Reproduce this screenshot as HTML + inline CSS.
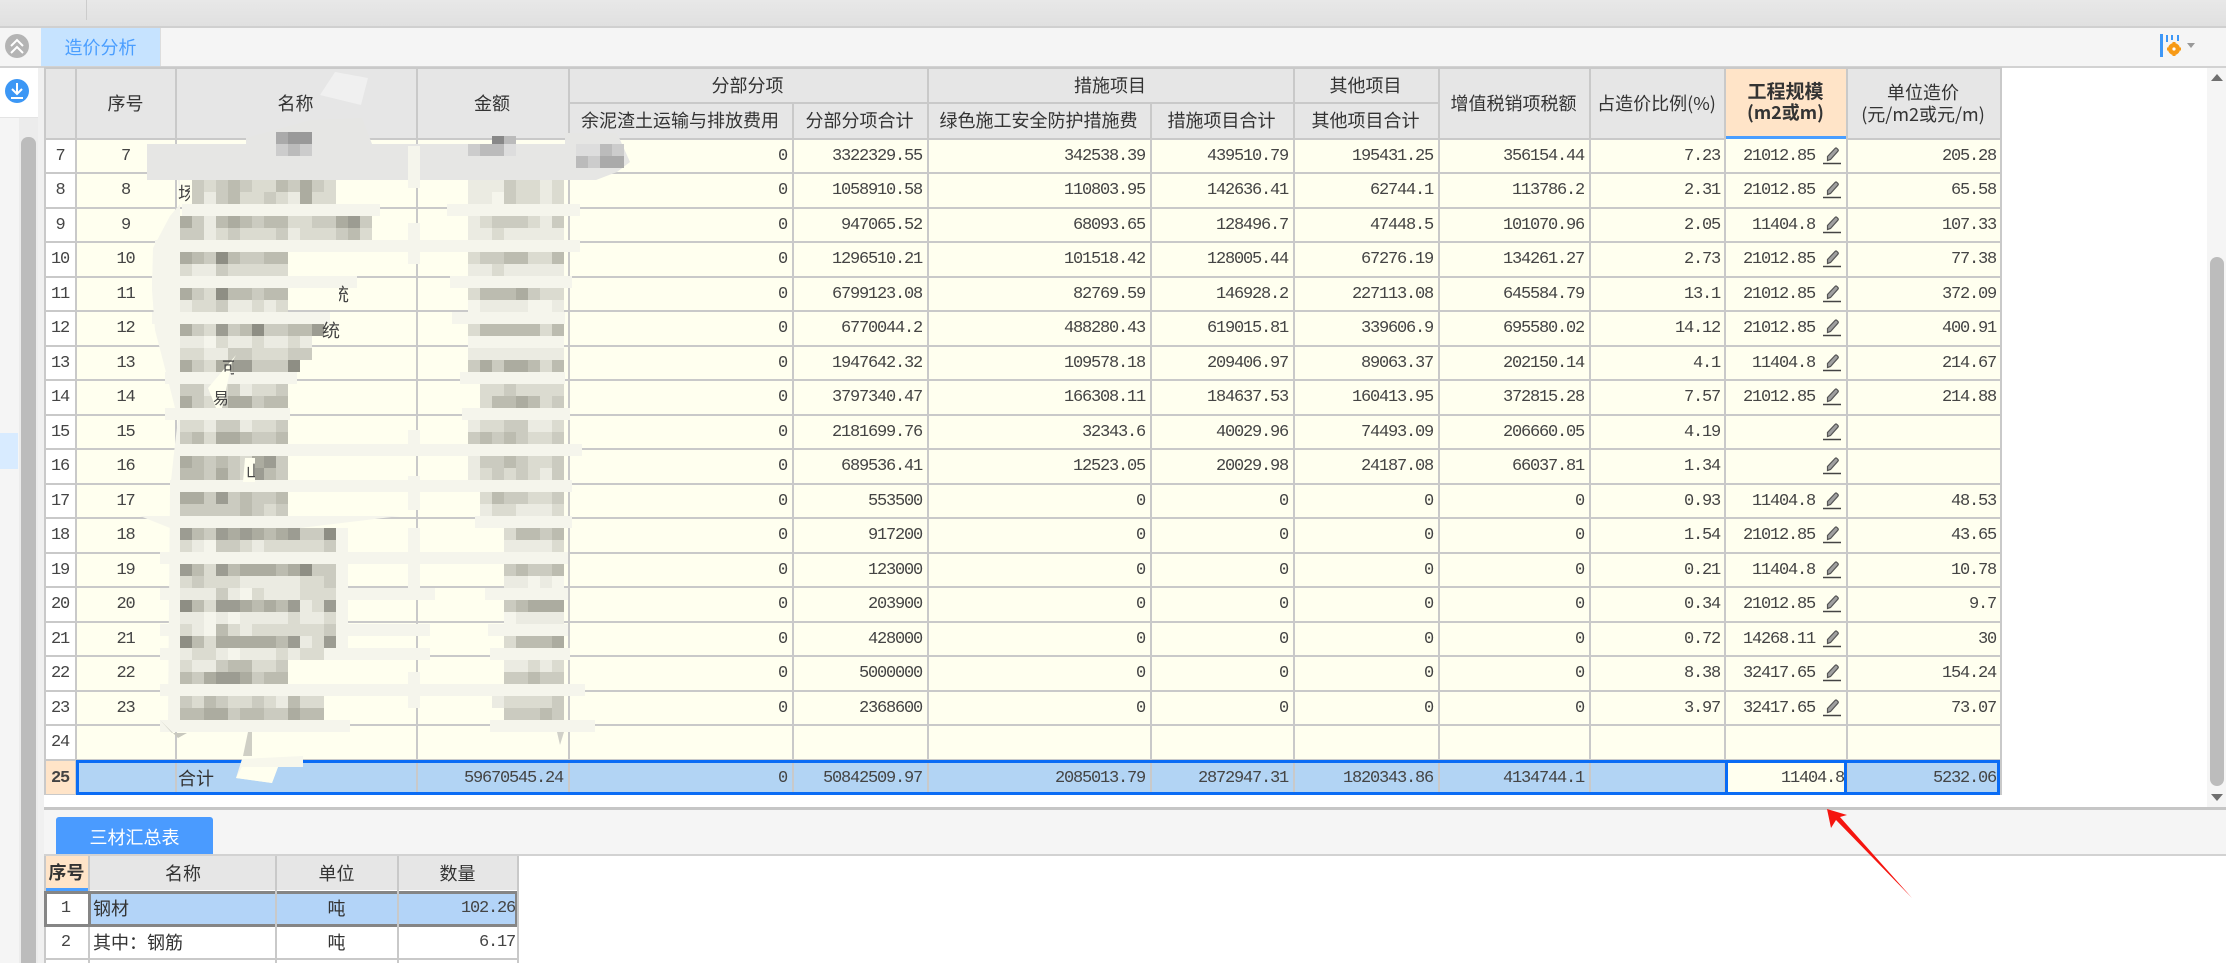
<!DOCTYPE html>
<html><head><meta charset="utf-8"><style>
html,body{margin:0;padding:0;width:2226px;height:963px;overflow:hidden;background:#fff}
body{position:relative;font:18px/20px "WenQuanYi Zen Hei","Noto Sans CJK SC",sans-serif;color:#333}
.x{position:absolute}
.h{position:absolute;text-align:center;white-space:nowrap;line-height:20px}
.v{position:absolute;width:2px;background:#c9c9c9}
.l{position:absolute;height:2px;background:#c9c9c9}
.r{position:absolute;left:0;width:2000px;height:34px;font:17px/35px "Liberation Mono",monospace;letter-spacing:-1.2px;color:#444}
.r i{position:absolute;font-style:normal;text-align:right;white-space:nowrap;top:0}
.r i:nth-child(1){left:44px;width:32px;text-align:center}
.r i:nth-child(2){left:76px;width:99px;text-align:center}
.r i:nth-child(3){left:175px;width:241px}
.r i:nth-child(4){left:416px;width:147px}
.r i:nth-child(5){left:568px;width:219px}
.r i:nth-child(6){left:792px;width:130px}
.r i:nth-child(7){left:927px;width:218px}
.r i:nth-child(8){left:1150px;width:138px}
.r i:nth-child(9){left:1293px;width:140px}
.r i:nth-child(10){left:1438px;width:146px}
.r i:nth-child(11){left:1589px;width:131px}
.r i:nth-child(12){left:1725px;width:90px}
.r i:nth-child(13){left:1846px;width:150px}
.r svg{position:absolute;left:1822px;top:7px;width:20px;height:20px}
.m{position:absolute;display:flex;height:12px}
.m i{display:block;width:12px;height:12px;flex:none}
.a{background:#acaca0}.b{background:#bcbcb0}.c{background:#cbcbc0}.d{background:#dbdbd0}.e{background:#ebebe2}.f{background:#f5f5ec}.k{background:#8e8e84}.n{background:#9c9c92}
.g1{background:#aaa}.g2{background:#999}.g3{background:#ccc}.g4{background:#bbb}.g5{background:#ddd}.g6{background:#888}
</style></head><body>

<!-- top bar -->
<div class="x" style="left:0;top:0;width:2226px;height:27px;background:linear-gradient(#e8e8e8,#e0e0e0)"></div>
<div class="x" style="left:86px;top:0;width:1px;height:20px;background:#ccc"></div>
<div class="x" style="left:0;top:26px;width:2226px;height:2px;background:#d0d0d0"></div>
<!-- tab bar -->
<div class="x" style="left:0;top:28px;width:2226px;height:38px;background:#f5f5f5"></div>
<div class="x" style="left:41px;top:28px;width:119px;height:38px;background:#c6e3ff;color:#4a9eff;text-align:center;line-height:38px">造价分析</div>
<div class="x" style="left:160px;top:28px;width:1px;height:38px;background:#ddd"></div>
<div class="x" style="left:0;top:66px;width:2226px;height:2px;background:#d2d2d2"></div>
<!-- left panel -->
<div class="x" style="left:0;top:68px;width:44px;height:895px;background:#f5f5f5"></div>
<div class="x" style="left:0;top:68px;width:40px;height:49px;background:#fff"></div>
<div class="x" style="left:0;top:117px;width:40px;height:1px;background:#e4e4e4"></div>
<div class="x" style="left:19px;top:118px;width:19px;height:845px;background:#ececec"></div>
<div class="x" style="left:21px;top:137px;width:15px;height:840px;border-radius:7px;background:#bcbcbc"></div>
<div class="x" style="left:0;top:433px;width:18px;height:36px;background:#d8ebff"></div>
<div class="x" style="left:38px;top:68px;width:6px;height:895px;background:#f0f0f0"></div>
<svg class="x" style="left:0;top:30px" width="40" height="90" viewBox="0 30 40 90">
<circle cx="17" cy="46" r="12" fill="#b4b4b4"/>
<path d="M11 46l6-6 6 6M11 53l6-6 6 6" fill="none" stroke="#fff" stroke-width="2"/>
<circle cx="17" cy="91" r="12" fill="#3c97f5"/>
<path d="M17 83v11M12 89l5 5 5-5M11 98h12" fill="none" stroke="#fff" stroke-width="2"/>
<path d="M22 129l6-7 6 7z" fill="#6f6f6f"/>
</svg>
<!-- top right icon -->
<svg class="x" style="left:2155px;top:30px" width="45" height="30" viewBox="2155 30 45 30">
<path d="M2160 34h3v23h-3zM2166 35h2v7h-2zM2171 35h2v5h-2zM2177 35h2v6h-2z" fill="#3d97f7"/>
<path d="M2172.500 42h3v3h-3zM2172.500 53h3v3h-3zM2167 47.500h3v3h-3zM2178 47.500h3v3h-3z" fill="#f79a16"/>
<circle cx="2174" cy="49" r="6" fill="#f79a16"/>
<circle cx="2174" cy="49" r="1.600" fill="#fff"/>
<path d="M2187 43h8l-4 5z" fill="#999"/>
</svg>
<!-- right scroll -->
<div class="x" style="left:2207px;top:68px;width:19px;height:739px;background:#f5f5f5"></div>
<div class="x" style="left:2210px;top:257px;width:14px;height:529px;border-radius:7px;background:#bcbcbc"></div>
<svg class="x" style="left:2207px;top:70px" width="19" height="735" viewBox="2207 70 19 735">
<path d="M2211 81l6-7 6 7z" fill="#6f6f6f"/><path d="M2211 794h12l-6 7z" fill="#6f6f6f"/>
</svg>

<!-- table backgrounds -->
<div class="x" style="left:44px;top:68px;width:1956px;height:71px;background:#e6e6e6"></div>
<div class="x" style="left:1725px;top:68px;width:121px;height:68px;background:#ffe4c8"></div>
<div class="x" style="left:1724px;top:136px;width:123px;height:3px;background:#4a9eff"></div>
<div class="x" style="left:44px;top:139px;width:32px;height:621px;background:#fff"></div>
<div class="x" style="left:76px;top:139px;width:1924px;height:621px;background:#ffffef"></div>
<div class="x" style="left:44px;top:760px;width:32px;height:35px;background:#ffe4c8"></div>
<div class="x" style="left:76px;top:760px;width:1924px;height:35px;background:#b2d4f4"></div>

<!-- horizontal lines -->
<div class="l" style="left:44px;top:67px;width:1957px"></div>
<div class="l" style="left:568px;top:102px;width:870px"></div>
<div class="l" style="left:44px;top:138px;width:1680px"></div>
<div class="l" style="left:1847px;top:138px;width:154px"></div>
<div class="l" style="left:44px;top:172px;width:1957px"></div>
<div class="l" style="left:44px;top:207px;width:1957px"></div>
<div class="l" style="left:44px;top:241px;width:1957px"></div>
<div class="l" style="left:44px;top:276px;width:1957px"></div>
<div class="l" style="left:44px;top:310px;width:1957px"></div>
<div class="l" style="left:44px;top:345px;width:1957px"></div>
<div class="l" style="left:44px;top:379px;width:1957px"></div>
<div class="l" style="left:44px;top:414px;width:1957px"></div>
<div class="l" style="left:44px;top:448px;width:1957px"></div>
<div class="l" style="left:44px;top:483px;width:1957px"></div>
<div class="l" style="left:44px;top:517px;width:1957px"></div>
<div class="l" style="left:44px;top:552px;width:1957px"></div>
<div class="l" style="left:44px;top:586px;width:1957px"></div>
<div class="l" style="left:44px;top:621px;width:1957px"></div>
<div class="l" style="left:44px;top:655px;width:1957px"></div>
<div class="l" style="left:44px;top:690px;width:1957px"></div>
<div class="l" style="left:44px;top:724px;width:1957px"></div>
<div class="l" style="left:44px;top:759px;width:1957px"></div>
<div class="l" style="left:44px;top:794px;width:32px"></div>
<!-- vertical lines -->
<div class="v" style="left:44px;top:67px;height:728px"></div>
<div class="v" style="left:75px;top:67px;height:728px"></div>
<div class="v" style="left:175px;top:67px;height:728px"></div>
<div class="v" style="left:416px;top:67px;height:728px"></div>
<div class="v" style="left:568px;top:67px;height:728px"></div>
<div class="v" style="left:792px;top:103px;height:692px"></div>
<div class="v" style="left:927px;top:67px;height:728px"></div>
<div class="v" style="left:1150px;top:103px;height:692px"></div>
<div class="v" style="left:1293px;top:67px;height:728px"></div>
<div class="v" style="left:1438px;top:67px;height:728px"></div>
<div class="v" style="left:1589px;top:67px;height:728px"></div>
<div class="v" style="left:1724px;top:67px;height:728px"></div>
<div class="v" style="left:1846px;top:67px;height:728px"></div>
<div class="v" style="left:2000px;top:67px;height:728px"></div>

<!-- headers -->
<div class="h" style="left:76px;width:99px;top:93px">序号</div>
<div class="h" style="left:175px;width:241px;top:93px">名称</div>
<div class="h" style="left:416px;width:152px;top:93px">金额</div>
<div class="h" style="left:568px;width:359px;top:75px">分部分项</div>
<div class="h" style="left:927px;width:366px;top:75px">措施项目</div>
<div class="h" style="left:1293px;width:145px;top:75px">其他项目</div>
<div class="h" style="left:568px;width:224px;top:110px">余泥渣土运输与排放费用</div>
<div class="h" style="left:792px;width:135px;top:110px">分部分项合计</div>
<div class="h" style="left:927px;width:223px;top:110px">绿色施工安全防护措施费</div>
<div class="h" style="left:1150px;width:143px;top:110px">措施项目合计</div>
<div class="h" style="left:1293px;width:145px;top:110px">其他项目合计</div>
<div class="h" style="left:1438px;width:151px;top:93px">增值税销项税额</div>
<div class="h" style="left:1589px;width:135px;top:93px">占造价比例(%)</div>
<div class="h" style="left:1725px;width:121px;top:81px;font-weight:bold;font-size:19px">工程规模</div>
<div class="h" style="left:1725px;width:121px;top:102px;font-weight:bold">(m2或m)</div>
<div class="h" style="left:1846px;width:154px;top:82px">单位造价</div>
<div class="h" style="left:1846px;width:154px;top:104px">(元/m2或元/m)</div>

<svg width="0" height="0" style="position:absolute"><symbol id="p" viewBox="0 0 20 20"><path d="M1 17.500H19" stroke="#444" stroke-width="1.600"/><path d="M5.500 14.500L5.500 10.500L13 2.500Q14 1.500 15 2.500L15.800 3.300Q16.800 4.300 15.800 5.300L8.500 13.500Z" fill="#a0a0a0" stroke="#555" stroke-width="1.200"/></symbol></svg>

<!-- rows -->
<div class="r" style="top:139px"><i>7</i><i>7</i><i></i><i></i><i>0</i><i>3322329.55</i><i>342538.39</i><i>439510.79</i><i>195431.25</i><i>356154.44</i><i>7.23</i><i>21012.85</i><i>205.28</i><svg><use href="#p"/></svg></div>
<div class="r" style="top:173px"><i>8</i><i>8</i><i></i><i></i><i>0</i><i>1058910.58</i><i>110803.95</i><i>142636.41</i><i>62744.1</i><i>113786.2</i><i>2.31</i><i>21012.85</i><i>65.58</i><svg><use href="#p"/></svg></div>
<div class="r" style="top:208px"><i>9</i><i>9</i><i></i><i></i><i>0</i><i>947065.52</i><i>68093.65</i><i>128496.7</i><i>47448.5</i><i>101070.96</i><i>2.05</i><i>11404.8</i><i>107.33</i><svg><use href="#p"/></svg></div>
<div class="r" style="top:242px"><i>10</i><i>10</i><i></i><i></i><i>0</i><i>1296510.21</i><i>101518.42</i><i>128005.44</i><i>67276.19</i><i>134261.27</i><i>2.73</i><i>21012.85</i><i>77.38</i><svg><use href="#p"/></svg></div>
<div class="r" style="top:277px"><i>11</i><i>11</i><i></i><i></i><i>0</i><i>6799123.08</i><i>82769.59</i><i>146928.2</i><i>227113.08</i><i>645584.79</i><i>13.1</i><i>21012.85</i><i>372.09</i><svg><use href="#p"/></svg></div>
<div class="r" style="top:311px"><i>12</i><i>12</i><i></i><i></i><i>0</i><i>6770044.2</i><i>488280.43</i><i>619015.81</i><i>339606.9</i><i>695580.02</i><i>14.12</i><i>21012.85</i><i>400.91</i><svg><use href="#p"/></svg></div>
<div class="r" style="top:346px"><i>13</i><i>13</i><i></i><i></i><i>0</i><i>1947642.32</i><i>109578.18</i><i>209406.97</i><i>89063.37</i><i>202150.14</i><i>4.1</i><i>11404.8</i><i>214.67</i><svg><use href="#p"/></svg></div>
<div class="r" style="top:380px"><i>14</i><i>14</i><i></i><i></i><i>0</i><i>3797340.47</i><i>166308.11</i><i>184637.53</i><i>160413.95</i><i>372815.28</i><i>7.57</i><i>21012.85</i><i>214.88</i><svg><use href="#p"/></svg></div>
<div class="r" style="top:415px"><i>15</i><i>15</i><i></i><i></i><i>0</i><i>2181699.76</i><i>32343.6</i><i>40029.96</i><i>74493.09</i><i>206660.05</i><i>4.19</i><i></i><i></i><svg><use href="#p"/></svg></div>
<div class="r" style="top:449px"><i>16</i><i>16</i><i></i><i></i><i>0</i><i>689536.41</i><i>12523.05</i><i>20029.98</i><i>24187.08</i><i>66037.81</i><i>1.34</i><i></i><i></i><svg><use href="#p"/></svg></div>
<div class="r" style="top:484px"><i>17</i><i>17</i><i></i><i></i><i>0</i><i>553500</i><i>0</i><i>0</i><i>0</i><i>0</i><i>0.93</i><i>11404.8</i><i>48.53</i><svg><use href="#p"/></svg></div>
<div class="r" style="top:518px"><i>18</i><i>18</i><i></i><i></i><i>0</i><i>917200</i><i>0</i><i>0</i><i>0</i><i>0</i><i>1.54</i><i>21012.85</i><i>43.65</i><svg><use href="#p"/></svg></div>
<div class="r" style="top:553px"><i>19</i><i>19</i><i></i><i></i><i>0</i><i>123000</i><i>0</i><i>0</i><i>0</i><i>0</i><i>0.21</i><i>11404.8</i><i>10.78</i><svg><use href="#p"/></svg></div>
<div class="r" style="top:587px"><i>20</i><i>20</i><i></i><i></i><i>0</i><i>203900</i><i>0</i><i>0</i><i>0</i><i>0</i><i>0.34</i><i>21012.85</i><i>9.7</i><svg><use href="#p"/></svg></div>
<div class="r" style="top:622px"><i>21</i><i>21</i><i></i><i></i><i>0</i><i>428000</i><i>0</i><i>0</i><i>0</i><i>0</i><i>0.72</i><i>14268.11</i><i>30</i><svg><use href="#p"/></svg></div>
<div class="r" style="top:656px"><i>22</i><i>22</i><i></i><i></i><i>0</i><i>5000000</i><i>0</i><i>0</i><i>0</i><i>0</i><i>8.38</i><i>32417.65</i><i>154.24</i><svg><use href="#p"/></svg></div>
<div class="r" style="top:691px"><i>23</i><i>23</i><i></i><i></i><i>0</i><i>2368600</i><i>0</i><i>0</i><i>0</i><i>0</i><i>3.97</i><i>32417.65</i><i>73.07</i><svg><use href="#p"/></svg></div>
<div class="r" style="top:725px"><i>24</i><i></i></div>

<!-- row 25 -->
<div class="x" style="left:76px;top:760px;width:1924px;height:35px;box-sizing:border-box;border:3px solid #0a6cf5"></div>
<div class="x" style="left:1725px;top:760px;width:122px;height:35px;box-sizing:border-box;border:3px solid #0a6cf5;background:#ffffef"></div>
<div class="r" style="top:761px"><i style="font-weight:bold">25</i><i></i><i></i><i>59670545.24</i><i>0</i><i>50842509.97</i><i>2085013.79</i><i>2872947.31</i><i>1820343.86</i><i>4134744.1</i><i></i><i style="width:119px;left:1725px">11404.8</i><i>5232.06</i></div>
<div class="x" style="left:178px;top:768px">合计</div>

<!-- redaction overlays -->
<svg class="x" style="left:0;top:0" width="2226" height="963" viewBox="0 0 2226 963">
<path d="M335 72L368 78L361 105L320 95Z" fill="#f0f0f0"/>
<path d="M246 138L311 120L362 118L372 144L565 144V133H617L630 162L617 172L596 180H147V144H246Z" fill="#e6e6e4"/>
<path d="M178 180L180 204L170 216L153 248L152 290L155 330L168 380L178 420L175 444L170 490L168 720L180 720V180ZM336 528H348V660H336Z" fill="#f5f5ec"/>
<path d="M182 204H380V216H182ZM447 204H580V216H447ZM155 240H580V252H155ZM152 276H357V288H152ZM450 276H572V288H450ZM152 312H330V324H152ZM452 312H565V324H452ZM165 372H297V384H165ZM460 372H565V384H460ZM165 408H290V420H165ZM462 408H570V420H462ZM175 444H582V456H175ZM170 480H572V492H170ZM140 516H400L300 528H170ZM475 516H572V528H475ZM160 552H568V564H160ZM160 588H435V600H160ZM485 588H568V600H485ZM160 624H430V636H160ZM488 624H568V636H488ZM160 648H430V660H160ZM490 648H570V660H490ZM160 684H585V696H160ZM160 720H350V732H160ZM490 720H595V732H490ZM408 146H420V188H408ZM408 223H420V264H408ZM408 430H420V456H408ZM408 476H420V510H408ZM408 528H420V600H408ZM408 672H420V708H408Z" fill="#f5f5ec"/>
<path d="M160 720L178 738L187 733H172Z" fill="#c8c8be"/>
<path d="M248 732L243 756H252V732Z" fill="#cfcfc5"/>
<path d="M557 732L560 745L564 732Z" fill="#d0d0c8"/>
<path d="M242 759L303 756V767H278L272 783L236 778Z" fill="#f7f7ec"/>
<path d="M242 767H278L272 783L236 778Z" fill="#ffffef"/>
</svg>
<div class="m" style="left:276px;top:132px"><i class="g1"></i><i class="g2"></i><i class="g2"></i></div>
<div class="m" style="left:276px;top:144px"><i class="g3"></i><i class="g4"></i><i class="g3"></i></div>
<div class="m" style="left:492px;top:136px;height:8px"><i class="g6" style="height:8px"></i><i class="g4" style="height:8px"></i></div>
<div class="m" style="left:468px;top:144px"><i class="g3"></i><i class="g4"></i><i class="g4"></i><i class="g5"></i></div>
<div class="m" style="left:576px;top:144px"><i class="g5"></i><i class="g5"></i><i class="g4"></i><i class="g3"></i></div>
<div class="m" style="left:576px;top:156px"><i class="g4"></i><i class="g3"></i><i class="g1"></i><i class="g1"></i></div>

<div class="m" style="left:192px;top:180px"><i class="c"></i><i class="d"></i><i class="c"></i><i class="b"></i><i class="c"></i><i class="d"></i><i class="d"></i><i class="b"></i><i class="c"></i><i class="a"></i><i class="c"></i><i class="d"></i></div>
<div class="m" style="left:192px;top:192px"><i class="c"></i><i class="e"></i><i class="c"></i><i class="b"></i><i class="d"></i><i class="d"></i><i class="c"></i><i class="d"></i><i class="e"></i><i class="a"></i><i class="d"></i><i class="d"></i></div>
<div class="m" style="left:180px;top:216px"><i class="a"></i><i class="c"></i><i class="e"></i><i class="b"></i><i class="a"></i><i class="b"></i><i class="c"></i><i class="b"></i><i class="b"></i><i class="d"></i><i class="d"></i><i class="c"></i><i class="c"></i><i class="a"></i><i class="n"></i><i class="c"></i></div>
<div class="m" style="left:180px;top:228px"><i class="c"></i><i class="c"></i><i class="e"></i><i class="d"></i><i class="c"></i><i class="d"></i><i class="d"></i><i class="d"></i><i class="c"></i><i class="e"></i><i class="d"></i><i class="d"></i><i class="d"></i><i class="c"></i><i class="b"></i><i class="d"></i></div>
<div class="m" style="left:180px;top:252px"><i class="a"></i><i class="b"></i><i class="c"></i><i class="k"></i><i class="b"></i><i class="c"></i><i class="c"></i><i class="b"></i><i class="b"></i></div>
<div class="m" style="left:180px;top:264px"><i class="d"></i><i class="e"></i><i class="e"></i><i class="c"></i><i class="d"></i><i class="d"></i><i class="d"></i><i class="d"></i><i class="d"></i></div>
<div class="m" style="left:180px;top:288px"><i class="a"></i><i class="c"></i><i class="d"></i><i class="k"></i><i class="b"></i><i class="b"></i><i class="c"></i><i class="b"></i><i class="b"></i></div>
<div class="m" style="left:180px;top:300px"><i class="e"></i><i class="d"></i><i class="d"></i><i class="c"></i><i class="e"></i><i class="e"></i><i class="d"></i><i class="e"></i><i class="d"></i></div>
<div class="m" style="left:180px;top:324px"><i class="a"></i><i class="c"></i><i class="d"></i><i class="n"></i><i class="c"></i><i class="b"></i><i class="k"></i><i class="c"></i><i class="c"></i><i class="b"></i><i class="b"></i><i class="n"></i></div>
<div class="m" style="left:180px;top:336px"><i class="e"></i><i class="e"></i><i class="f"></i><i class="d"></i><i class="e"></i><i class="e"></i><i class="d"></i><i class="e"></i><i class="e"></i><i class="d"></i><i class="e"></i></div>
<div class="m" style="left:180px;top:348px"><i class="d"></i><i class="d"></i><i class="e"></i><i class="e"></i><i class="c"></i><i class="c"></i><i class="d"></i><i class="d"></i><i class="d"></i><i class="c"></i><i class="c"></i></div>
<div class="m" style="left:180px;top:360px"><i class="a"></i><i class="c"></i><i class="d"></i><i class="a"></i><i class="n"></i><i class="n"></i><i class="c"></i><i class="c"></i><i class="c"></i><i class="k"></i></div>
<div class="m" style="left:180px;top:384px"><i class="c"></i><i class="c"></i><i class="e"></i><i class="d"></i><i class="c"></i><i class="e"></i><i class="d"></i><i class="d"></i><i class="c"></i></div>
<div class="m" style="left:180px;top:396px"><i class="a"></i><i class="c"></i><i class="d"></i><i class="c"></i><i class="a"></i><i class="a"></i><i class="c"></i><i class="b"></i><i class="b"></i></div>
<div class="m" style="left:180px;top:420px"><i class="d"></i><i class="d"></i><i class="e"></i><i class="c"></i><i class="c"></i><i class="e"></i><i class="d"></i><i class="d"></i><i class="c"></i></div>
<div class="m" style="left:180px;top:432px"><i class="c"></i><i class="b"></i><i class="d"></i><i class="a"></i><i class="a"></i><i class="b"></i><i class="c"></i><i class="c"></i><i class="b"></i></div>
<div class="m" style="left:180px;top:456px"><i class="a"></i><i class="b"></i><i class="c"></i><i class="b"></i><i class="c"></i><i class="d"></i><i class="a"></i><i class="n"></i><i class="c"></i></div>
<div class="m" style="left:180px;top:468px"><i class="b"></i><i class="b"></i><i class="c"></i><i class="a"></i><i class="c"></i><i class="d"></i><i class="n"></i><i class="b"></i><i class="c"></i></div>
<div class="m" style="left:180px;top:492px"><i class="a"></i><i class="a"></i><i class="c"></i><i class="n"></i><i class="c"></i><i class="b"></i><i class="c"></i><i class="c"></i><i class="b"></i></div>
<div class="m" style="left:180px;top:504px"><i class="c"></i><i class="c"></i><i class="c"></i><i class="c"></i><i class="c"></i><i class="b"></i><i class="c"></i><i class="d"></i><i class="c"></i></div>
<div class="m" style="left:180px;top:528px"><i class="n"></i><i class="b"></i><i class="c"></i><i class="n"></i><i class="a"></i><i class="n"></i><i class="a"></i><i class="b"></i><i class="a"></i><i class="n"></i><i class="c"></i><i class="c"></i><i class="k"></i></div>
<div class="m" style="left:180px;top:540px"><i class="d"></i><i class="e"></i><i class="f"></i><i class="c"></i><i class="c"></i><i class="d"></i><i class="e"></i><i class="d"></i><i class="d"></i><i class="d"></i><i class="d"></i><i class="d"></i><i class="c"></i></div>
<div class="m" style="left:180px;top:564px"><i class="n"></i><i class="b"></i><i class="d"></i><i class="n"></i><i class="b"></i><i class="a"></i><i class="a"></i><i class="a"></i><i class="b"></i><i class="a"></i><i class="k"></i><i class="c"></i><i class="c"></i></div>
<div class="m" style="left:180px;top:576px"><i class="d"></i><i class="c"></i><i class="d"></i><i class="d"></i><i class="d"></i><i class="e"></i><i class="e"></i><i class="e"></i><i class="e"></i><i class="e"></i><i class="d"></i><i class="d"></i><i class="c"></i></div>
<div class="m" style="left:180px;top:588px"><i class="e"></i><i class="e"></i><i class="e"></i><i class="c"></i><i class="e"></i><i class="f"></i><i class="d"></i><i class="e"></i><i class="e"></i><i class="e"></i><i class="d"></i><i class="d"></i><i class="d"></i></div>
<div class="m" style="left:180px;top:600px"><i class="k"></i><i class="b"></i><i class="d"></i><i class="n"></i><i class="n"></i><i class="a"></i><i class="b"></i><i class="a"></i><i class="b"></i><i class="n"></i><i class="e"></i><i class="d"></i><i class="n"></i></div>
<div class="m" style="left:180px;top:612px"><i class="e"></i><i class="e"></i><i class="f"></i><i class="e"></i><i class="f"></i><i class="e"></i><i class="e"></i><i class="e"></i><i class="e"></i><i class="d"></i><i class="e"></i><i class="e"></i><i class="d"></i></div>
<div class="m" style="left:180px;top:624px"><i class="d"></i><i class="e"></i><i class="f"></i><i class="b"></i><i class="d"></i><i class="e"></i><i class="d"></i><i class="d"></i><i class="d"></i><i class="d"></i><i class="d"></i><i class="d"></i><i class="c"></i></div>
<div class="m" style="left:180px;top:636px"><i class="k"></i><i class="b"></i><i class="d"></i><i class="a"></i><i class="a"></i><i class="a"></i><i class="a"></i><i class="a"></i><i class="b"></i><i class="n"></i><i class="e"></i><i class="d"></i><i class="n"></i></div>
<div class="m" style="left:180px;top:648px"><i class="e"></i><i class="d"></i><i class="d"></i><i class="e"></i><i class="f"></i><i class="e"></i><i class="e"></i><i class="e"></i><i class="d"></i><i class="e"></i><i class="d"></i><i class="d"></i></div>
<div class="m" style="left:180px;top:660px"><i class="d"></i><i class="e"></i><i class="e"></i><i class="c"></i><i class="b"></i><i class="b"></i><i class="d"></i><i class="d"></i><i class="c"></i></div>
<div class="m" style="left:180px;top:672px"><i class="b"></i><i class="c"></i><i class="a"></i><i class="n"></i><i class="n"></i><i class="a"></i><i class="c"></i><i class="b"></i><i class="b"></i></div>
<div class="m" style="left:180px;top:696px"><i class="c"></i><i class="d"></i><i class="b"></i><i class="c"></i><i class="d"></i><i class="d"></i><i class="c"></i><i class="d"></i><i class="e"></i><i class="b"></i><i class="d"></i><i class="d"></i></div>
<div class="m" style="left:180px;top:708px"><i class="b"></i><i class="b"></i><i class="a"></i><i class="a"></i><i class="c"></i><i class="b"></i><i class="b"></i><i class="c"></i><i class="c"></i><i class="a"></i><i class="b"></i><i class="b"></i></div>

<div class="m" style="left:468px;top:180px"><i class="e"></i><i class="e"></i><i class="e"></i><i class="c"></i><i class="d"></i><i class="d"></i><i class="e"></i><i class="d"></i></div>
<div class="m" style="left:468px;top:192px"><i class="e"></i><i class="e"></i><i class="f"></i><i class="c"></i><i class="d"></i><i class="d"></i><i class="e"></i><i class="d"></i></div>
<div class="m" style="left:468px;top:216px"><i class="e"></i><i class="d"></i><i class="c"></i><i class="c"></i><i class="c"></i><i class="d"></i><i class="e"></i><i class="c"></i></div>
<div class="m" style="left:468px;top:228px"><i class="e"></i><i class="e"></i><i class="d"></i><i class="e"></i><i class="e"></i><i class="e"></i><i class="e"></i><i class="e"></i></div>
<div class="m" style="left:468px;top:252px"><i class="d"></i><i class="c"></i><i class="c"></i><i class="b"></i><i class="b"></i><i class="d"></i><i class="d"></i><i class="b"></i></div>
<div class="m" style="left:468px;top:264px"><i class="e"></i><i class="e"></i><i class="d"></i><i class="e"></i><i class="e"></i><i class="e"></i><i class="e"></i><i class="e"></i></div>
<div class="m" style="left:468px;top:288px"><i class="d"></i><i class="b"></i><i class="b"></i><i class="b"></i><i class="a"></i><i class="c"></i><i class="d"></i><i class="d"></i></div>
<div class="m" style="left:468px;top:300px"><i class="f"></i><i class="e"></i><i class="e"></i><i class="e"></i><i class="e"></i><i class="f"></i><i class="f"></i><i class="e"></i></div>
<div class="m" style="left:468px;top:324px"><i class="d"></i><i class="b"></i><i class="b"></i><i class="b"></i><i class="b"></i><i class="b"></i><i class="d"></i><i class="b"></i></div>
<div class="m" style="left:468px;top:336px"><i class="f"></i><i class="f"></i><i class="f"></i><i class="f"></i><i class="f"></i><i class="f"></i><i class="f"></i><i class="f"></i></div>
<div class="m" style="left:468px;top:348px"><i class="e"></i><i class="e"></i><i class="e"></i><i class="e"></i><i class="e"></i><i class="e"></i><i class="e"></i><i class="e"></i></div>
<div class="m" style="left:468px;top:360px"><i class="c"></i><i class="a"></i><i class="c"></i><i class="a"></i><i class="a"></i><i class="b"></i><i class="d"></i><i class="b"></i></div>
<div class="m" style="left:480px;top:384px"><i class="d"></i><i class="d"></i><i class="c"></i><i class="d"></i><i class="d"></i><i class="d"></i><i class="d"></i></div>
<div class="m" style="left:480px;top:396px"><i class="d"></i><i class="b"></i><i class="b"></i><i class="a"></i><i class="b"></i><i class="d"></i><i class="c"></i></div>
<div class="m" style="left:468px;top:420px"><i class="e"></i><i class="d"></i><i class="d"></i><i class="c"></i><i class="c"></i><i class="e"></i><i class="e"></i><i class="d"></i></div>
<div class="m" style="left:468px;top:432px"><i class="c"></i><i class="b"></i><i class="c"></i><i class="b"></i><i class="c"></i><i class="d"></i><i class="d"></i><i class="c"></i></div>
<div class="m" style="left:468px;top:456px"><i class="e"></i><i class="c"></i><i class="c"></i><i class="b"></i><i class="c"></i><i class="d"></i><i class="d"></i><i class="c"></i></div>
<div class="m" style="left:468px;top:468px"><i class="e"></i><i class="d"></i><i class="c"></i><i class="d"></i><i class="c"></i><i class="d"></i><i class="e"></i><i class="c"></i></div>
<div class="m" style="left:480px;top:492px"><i class="d"></i><i class="b"></i><i class="c"></i><i class="c"></i><i class="d"></i><i class="d"></i><i class="c"></i></div>
<div class="m" style="left:480px;top:504px"><i class="e"></i><i class="d"></i><i class="d"></i><i class="e"></i><i class="e"></i><i class="e"></i><i class="d"></i></div>
<div class="m" style="left:504px;top:528px"><i class="d"></i><i class="b"></i><i class="b"></i><i class="c"></i><i class="b"></i></div>
<div class="m" style="left:504px;top:540px"><i class="e"></i><i class="e"></i><i class="e"></i><i class="e"></i><i class="d"></i></div>
<div class="m" style="left:504px;top:564px"><i class="c"></i><i class="b"></i><i class="c"></i><i class="c"></i><i class="b"></i></div>
<div class="m" style="left:504px;top:576px"><i class="e"></i><i class="e"></i><i class="f"></i><i class="e"></i><i class="f"></i></div>
<div class="m" style="left:504px;top:600px"><i class="c"></i><i class="b"></i><i class="a"></i><i class="a"></i><i class="a"></i></div>
<div class="m" style="left:504px;top:612px"><i class="f"></i><i class="e"></i><i class="e"></i><i class="e"></i><i class="e"></i></div>
<div class="m" style="left:504px;top:636px"><i class="d"></i><i class="b"></i><i class="b"></i><i class="b"></i><i class="a"></i></div>
<div class="m" style="left:504px;top:660px"><i class="e"></i><i class="e"></i><i class="d"></i><i class="e"></i><i class="d"></i></div>
<div class="m" style="left:504px;top:672px"><i class="c"></i><i class="c"></i><i class="b"></i><i class="c"></i><i class="c"></i></div>
<div class="m" style="left:492px;top:696px"><i class="e"></i><i class="d"></i><i class="d"></i><i class="d"></i><i class="d"></i><i class="c"></i></div>
<div class="m" style="left:504px;top:708px"><i class="c"></i><i class="c"></i><i class="c"></i><i class="b"></i><i class="c"></i></div>

<!-- exposed gaps in the redaction, with text remnants -->
<svg class="x" style="left:0;top:0" width="600" height="500" viewBox="0 0 600 500">
<path d="M236 355L208 388L216 408L222 408L232 362Z" fill="#ffffef"/>
<path d="M245 458H255V482H243Z" fill="#ffffef"/>
</svg>
<div class="x" style="left:178px;top:183px;width:12px;height:20px;overflow:hidden;color:#444">场</div>
<div class="x" style="left:339px;top:284px;width:10px;overflow:hidden;color:#444;direction:rtl">统</div>
<div class="x" style="left:322px;top:320px;color:#444">统</div>
<div class="x" style="left:222px;top:356px;width:12px;overflow:hidden;color:#444;font-size:16px">可</div>
<div class="x" style="left:213px;top:387px;width:14px;overflow:hidden;color:#444;font-size:16px">易</div>
<div class="x" style="left:246px;top:460px;width:9px;overflow:hidden;color:#444;font-size:16px">山</div>

<!-- lower section -->
<div class="x" style="left:44px;top:795px;width:2163px;height:12px;background:#fff"></div>
<div class="x" style="left:44px;top:807px;width:2182px;height:3px;background:#c6c6c6"></div>
<div class="x" style="left:44px;top:810px;width:2182px;height:44px;background:#f5f5f5"></div>
<div class="x" style="left:44px;top:854px;width:2182px;height:2px;background:#d2d2d2"></div>
<div class="x" style="left:56px;top:817px;width:157px;height:37px;background:#4a9bff;color:#fff;text-align:center;line-height:40px;border-radius:3px 3px 0 0">三材汇总表</div>

<!-- bottom table -->
<div class="x" style="left:44px;top:856px;width:474px;height:34px;background:#e6e6e6"></div>
<div class="x" style="left:44px;top:856px;width:45px;height:32px;background:#ffe4c8;font-weight:bold;text-align:center;line-height:32px">序号</div>
<div class="x" style="left:44px;top:888px;width:46px;height:3px;background:#4a9eff"></div>
<div class="h" style="left:90px;width:186px;top:863px">名称</div>
<div class="h" style="left:276px;width:121px;top:863px">单位</div>
<div class="h" style="left:397px;width:121px;top:863px">数量</div>
<div class="x" style="left:90px;top:891px;width:428px;height:2px;background:#888"></div>
<div class="x" style="left:44px;top:891px;width:474px;height:36px;box-sizing:border-box;border:3px solid #858585;background:#fff"></div>
<div class="x" style="left:88px;top:891px;width:430px;height:36px;box-sizing:border-box;border:3px solid #858585;background:#b3d4f8"></div>
<div class="v" style="left:275px;top:856px;height:107px"></div>
<div class="v" style="left:397px;top:856px;height:107px"></div>
<div class="v" style="left:88px;top:927px;height:36px"></div>
<div class="v" style="left:44px;top:856px;height:35px"></div>
<div class="v" style="left:88px;top:856px;height:35px"></div>
<div class="v" style="left:44px;top:927px;height:36px"></div>
<div class="v" style="left:517px;top:856px;height:107px"></div>
<div class="l" style="left:44px;top:958px;width:474px"></div>
<div class="x" style="left:44px;top:896px;width:44px;text-align:center;font:17px/26px 'Liberation Mono',monospace;color:#444">1</div>
<div class="x" style="left:93px;top:898px;white-space:nowrap">钢材</div>
<div class="h" style="left:276px;width:121px;top:898px">吨</div>
<div class="x" style="left:397px;top:896px;width:118px;text-align:right;font:17px/26px 'Liberation Mono',monospace;letter-spacing:-1.200px;color:#444">102.26</div>
<div class="x" style="left:44px;top:930px;width:44px;text-align:center;font:17px/26px 'Liberation Mono',monospace;color:#444">2</div>
<div class="x" style="left:93px;top:932px;white-space:nowrap">其中：钢筋</div>
<div class="h" style="left:276px;width:121px;top:932px">吨</div>
<div class="x" style="left:397px;top:930px;width:118px;text-align:right;font:17px/26px 'Liberation Mono',monospace;letter-spacing:-1.200px;color:#444">6.17</div>

<!-- red arrow -->
<svg class="x" style="left:1800px;top:800px" width="130" height="110" viewBox="1800 800 130 110">
<path d="M1827 809L1847 815L1840 817L1912 898L1836 820L1831 828Z" fill="#f5150f"/>
</svg>
</body></html>
